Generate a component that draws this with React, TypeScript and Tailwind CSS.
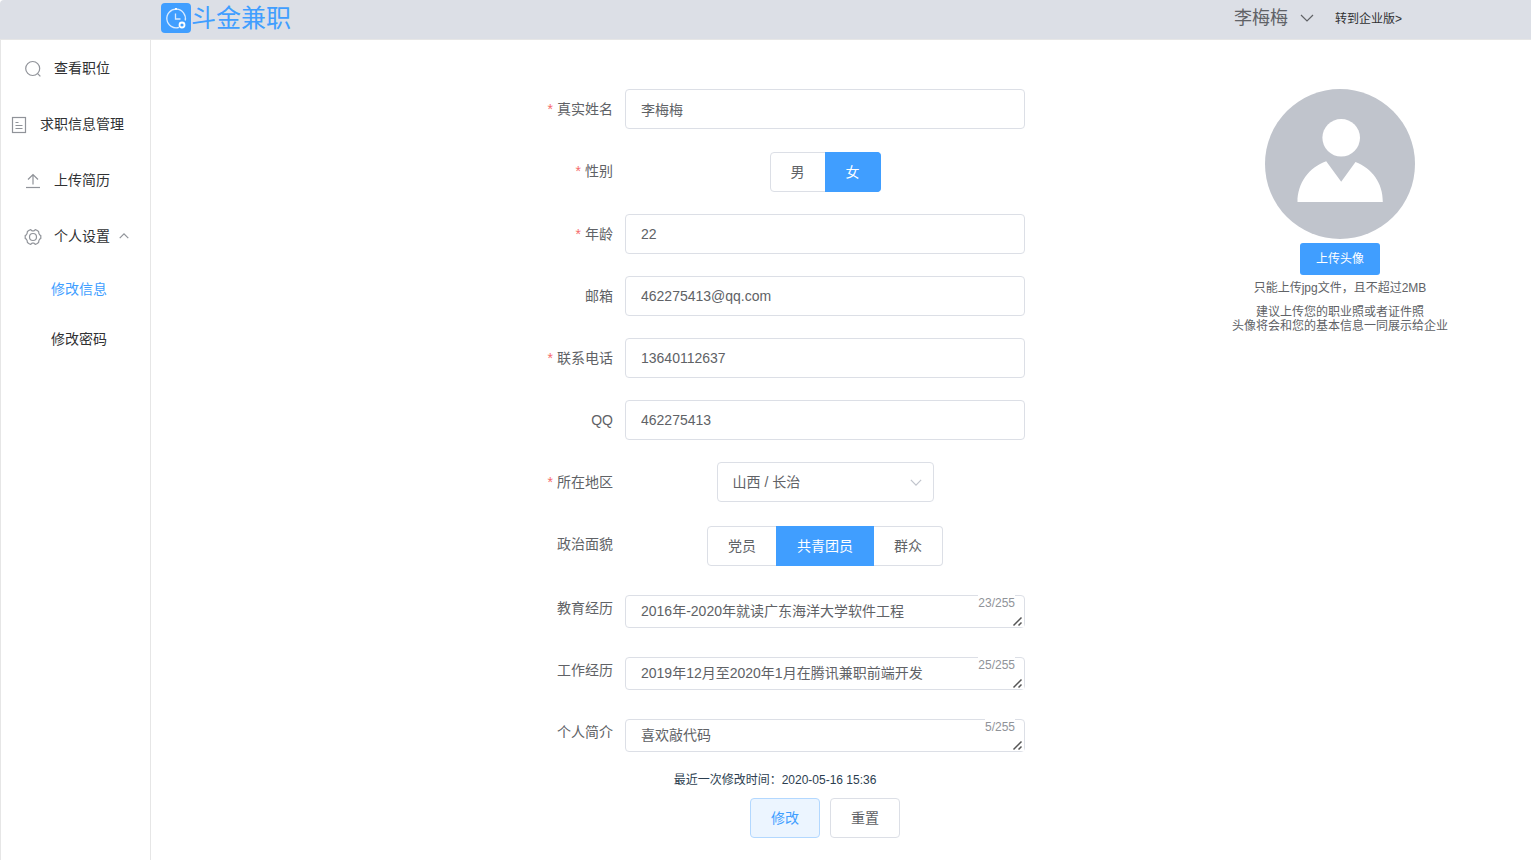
import React, { useState } from 'react';

const inputClass =
  'h-10 w-full rounded border border-[#dcdfe6] bg-white px-[15px] text-sm text-[#606266] outline-none focus:border-[#409eff]';

function LogoIcon() {
  return (
    <svg className="h-[30px] w-[30px]" viewBox="0 0 30 30" fill="none" aria-hidden="true">
      <rect width="30" height="30" rx="4" fill="#409eff" />
      <path d="M18 24.3A9.3 9.3 0 1 1 24.2 17.5" stroke="#d8eaff" strokeWidth="1.3" />
      <path d="M15 5v1.8" stroke="#fff" strokeWidth="2" />
      <path d="M14.5 10.500v5.500h5" stroke="#d8eaff" strokeWidth="1.3" />
      <circle cx="21" cy="22" r="2.5" stroke="#fff" strokeWidth="1.8" />
    </svg>
  );
}

function SearchIcon() {
  return (
    <svg className="h-[18px] w-6" viewBox="0 0 24 18" fill="none" stroke="#909399" strokeWidth="1.2" aria-hidden="true">
      <circle cx="11.7" cy="8.5" r="7" />
      <path d="M16.6 13.6l2.8 2.8" />
    </svg>
  );
}

function DocumentIcon() {
  return (
    <svg className="h-[18px] w-6" viewBox="0 0 24 18" fill="none" stroke="#909399" strokeWidth="1.2" aria-hidden="true">
      <rect x="5.5" y="1.5" width="13" height="15" />
      <path d="M8.5 6.5h3M8.5 9.5h7M8.5 12.5h7" />
    </svg>
  );
}

function UploadIcon() {
  return (
    <svg className="h-[18px] w-6" viewBox="0 0 24 18" fill="none" stroke="#909399" strokeWidth="1.2" aria-hidden="true">
      <path d="M12 2.5v10M7 7.5l5-5 5 5" />
      <path d="M5 15.5h14" />
    </svg>
  );
}

function SettingIcon() {
  return (
    <svg
      className="h-[18px] w-6"
      viewBox="0 0 24 18"
      fill="none"
      stroke="#909399"
      strokeWidth="1.2"
      strokeLinejoin="round"
      aria-hidden="true"
    >
      <path d="M8.200 2.300 9.800 1.600 11 2.800h2l1.200-1.200 1.600.7 1.800 1.200.3 2 .9 1.400 1 .7v2.800l-1 .7-.9 1.400-.3 2-1.800 1.200-1.600.7-1.200-1.200h-2l-1.200 1.200-1.600-.7-1.800-1.200-.3-2-.9-1.400-1-.7V7.600l1-.7.9-1.400.3-2z" />
      <circle cx="12" cy="9" r="3.5" />
    </svg>
  );
}

function Chevron({ className }: { className: string }) {
  return (
    <svg className={className} viewBox="0 0 14 8" fill="none" stroke="currentColor" aria-hidden="true">
      <path d="M1 1l6 6 6-6" strokeWidth="1.2" vectorEffect="non-scaling-stroke" />
    </svg>
  );
}

function MenuItem({
  icon,
  wide,
  open,
  children,
}: {
  icon: React.ReactNode;
  wide?: boolean;
  open?: boolean;
  children: React.ReactNode;
}) {
  return (
    <a
      href="#"
      className={`flex h-14 items-center gap-[9px] text-sm text-[#303133] ${wide ? 'pl-1.5' : 'pl-5'}`}
    >
      <span className="pt-0.5">{icon}</span>
      <span className="whitespace-nowrap">{children}</span>
      {open && <Chevron className="h-[6px] w-[10px] rotate-180 text-[#909399]" />}
    </a>
  );
}

function FormItem({
  label,
  htmlFor,
  required,
  children,
}: {
  label: string;
  htmlFor: string;
  required?: boolean;
  children: React.ReactNode;
}) {
  return (
    <div className="flex">
      <label
        htmlFor={htmlFor}
        className="h-10 w-[100px] shrink-0 pr-3 text-right text-sm leading-10 text-[#606266]"
      >
        {required && <span className="mr-1 text-[#f56c6c]">*</span>}
        {label}
      </label>
      <div className="flex-1">{children}</div>
    </div>
  );
}

function RadioGroup({
  id,
  options,
  defaultValue,
  className,
}: {
  id: string;
  options: string[];
  defaultValue: string;
  className: string;
}) {
  const [value, setValue] = useState(defaultValue);

  return (
    <div className={`flex justify-center ${className}`}>
      {options.map((option, index) => (
        <label key={option} className="group cursor-pointer text-sm">
          <input
            id={index === 0 ? id : undefined}
            type="radio"
            name={id}
            value={option}
            checked={value === option}
            onChange={() => setValue(option)}
            className="peer sr-only"
          />
          <span className="flex h-10 items-center border border-l-0 border-[#dcdfe6] px-5 text-[#606266] group-first:rounded-l group-first:border-l group-last:rounded-r peer-checked:border-[#409eff] peer-checked:bg-[#409eff] peer-checked:text-white peer-checked:shadow-[-1px_0_0_0_#409eff]">
            {option}
          </span>
        </label>
      ))}
    </div>
  );
}

function CountedTextarea({ id, defaultValue }: { id: string; defaultValue: string }) {
  const [text, setText] = useState(defaultValue);

  return (
    <div className="h-10 pt-[7px]">
      <div className="relative">
        <textarea
          id={id}
          rows={1}
          maxLength={255}
          value={text}
          onChange={(e) => setText(e.target.value)}
          className="block h-[33px] w-full resize-y rounded border border-[#dcdfe6] bg-white px-[15px] py-[5px] text-sm leading-[21px] text-[#606266] outline-none"
        />
        <span className="absolute top-0 right-[10px] bg-white pt-px text-xs leading-[14px] text-[#909399]">
          {text.length}/255
        </span>
        {/* resize grip */}
        <svg
          className="pointer-events-none absolute right-px bottom-px h-3 w-3 bg-white"
          viewBox="0 0 12 12"
          stroke="#555"
          strokeWidth="1.500"
          aria-hidden="true"
        >
          <path d="M1.500 10.500l8-8M6.500 10.500l3-3" />
        </svg>
      </div>
    </div>
  );
}

function Header() {
  return (
    <header className="flex h-10 items-start justify-between rounded-tl border-b border-[#e6e6e6] bg-[#dcdfe6] pr-[129px] pl-[161px]">
      <a href="#" className="flex h-9 items-center text-[25px] leading-9 text-[#409eff]">
        <LogoIcon />
        斗金兼职
      </a>
      <div className="flex h-9 items-center">
        <button type="button" className="flex items-center gap-3 text-lg leading-9 text-[#606266]">
          李梅梅
          <Chevron className="h-2 w-[14px]" />
        </button>
        <a href="#" className="ml-[21px] pt-0.5 text-xs text-[#303133]">
          转到企业版&gt;
        </a>
      </div>
    </header>
  );
}

function Sidebar() {
  return (
    <nav className="w-[151px] shrink-0 border-x border-[#e6e6e6]">
      <MenuItem icon={<SearchIcon />}>查看职位</MenuItem>
      <MenuItem icon={<DocumentIcon />} wide>
        求职信息管理
      </MenuItem>
      <MenuItem icon={<UploadIcon />}>上传简历</MenuItem>
      <MenuItem icon={<SettingIcon />} open>
        个人设置
      </MenuItem>
      <a href="#" className="block pl-[50px] text-sm leading-[50px] text-[#409eff]">
        修改信息
      </a>
      <a href="#" className="block pl-[50px] text-sm leading-[50px] text-[#303133]">
        修改密码
      </a>
    </nav>
  );
}

function InfoForm() {
  return (
    <form className="col-start-2 flex flex-col gap-[22px]" onSubmit={(e) => e.preventDefault()}>
      <FormItem label="真实姓名" htmlFor="name" required>
        <input id="name" className={inputClass} defaultValue="李梅梅" />
      </FormItem>
      <FormItem label="性别" htmlFor="sex" required>
        <RadioGroup id="sex" options={['男', '女']} defaultValue="女" className="pt-px" />
      </FormItem>
      <FormItem label="年龄" htmlFor="age" required>
        <input id="age" className={inputClass} defaultValue="22" />
      </FormItem>
      <FormItem label="邮箱" htmlFor="email">
        <input id="email" className={inputClass} defaultValue="462275413@qq.com" />
      </FormItem>
      <FormItem label="联系电话" htmlFor="phone" required>
        <input id="phone" className={inputClass} defaultValue="13640112637" />
      </FormItem>
      <FormItem label="QQ" htmlFor="qq">
        <input id="qq" className={inputClass} defaultValue="462275413" />
      </FormItem>
      <FormItem label="所在地区" htmlFor="region" required>
        <div className="relative mx-auto w-[217px]">
          <select id="region" className={`${inputClass} appearance-none`}>
            <option>山西 / 长治</option>
          </select>
          <Chevron className="pointer-events-none absolute top-[17px] right-3 h-[7px] w-3 text-[#c0c4cc]" />
        </div>
      </FormItem>
      <FormItem label="政治面貌" htmlFor="politics">
        <RadioGroup
          id="politics"
          options={['党员', '共青团员', '群众']}
          defaultValue="共青团员"
          className="pt-0.5"
        />
      </FormItem>
      <FormItem label="教育经历" htmlFor="education">
        <CountedTextarea id="education" defaultValue="2016年-2020年就读广东海洋大学软件工程" />
      </FormItem>
      <FormItem label="工作经历" htmlFor="work">
        <CountedTextarea id="work" defaultValue="2019年12月至2020年1月在腾讯兼职前端开发" />
      </FormItem>
      <FormItem label="个人简介" htmlFor="intro">
        <CountedTextarea id="intro" defaultValue="喜欢敲代码" />
      </FormItem>
      <div>
        <p className="text-center text-xs leading-3 text-[#2c3e50]">最近一次修改时间：2020-05-16 15:36</p>
        <div className="flex justify-center gap-[10px] pt-3 pl-[100px]">
          <button
            type="submit"
            className="h-10 rounded border border-[#b3d8ff] bg-[#ecf5ff] px-5 text-sm text-[#409eff]"
          >
            修改
          </button>
          <button
            type="reset"
            className="h-10 rounded border border-[#dcdfe6] bg-white px-5 text-sm text-[#606266]"
          >
            重置
          </button>
        </div>
      </div>
    </form>
  );
}

function AvatarPanel() {
  return (
    <aside className="col-start-4 flex flex-col items-center text-center text-xs text-[#606266]">
      <svg className="h-[150px] w-[150px]" viewBox="0 0 150 150" role="img" aria-label="头像">
        <circle cx="75" cy="75" r="75" fill="#c0c4cc" />
        <circle cx="76.2" cy="48.8" r="18.8" fill="#fff" />
        <path d="M61.2 72.3 76.2 92.8 90.5 73C107 79.500 118 94 117.800 113H32.500C32.500 94 44 78.500 61.200 72.300z" fill="#fff" />
      </svg>
      <button type="button" className="mt-1 h-8 rounded-[3px] bg-[#409eff] px-4 text-xs text-white">
        上传头像
      </button>
      <p className="mt-1.5 leading-[14px]">只能上传jpg文件，且不超过2MB</p>
      <p className="mt-[10px] leading-[14px]">
        建议上传您的职业照或者证件照
        <br />
        头像将会和您的基本信息一同展示给企业
      </p>
    </aside>
  );
}

export default function App() {
  return (
    <div className="flex min-h-screen flex-col bg-white font-['Liberation_Sans','Noto_Sans_CJK_SC',sans-serif]">
      <Header />
      <div className="flex flex-1">
        <Sidebar />
        <main className="grid flex-1 grid-cols-[187fr_500px_62fr_191fr] items-start pt-[49px] pb-5">
          <InfoForm />
          <AvatarPanel />
        </main>
      </div>
    </div>
  );
}
